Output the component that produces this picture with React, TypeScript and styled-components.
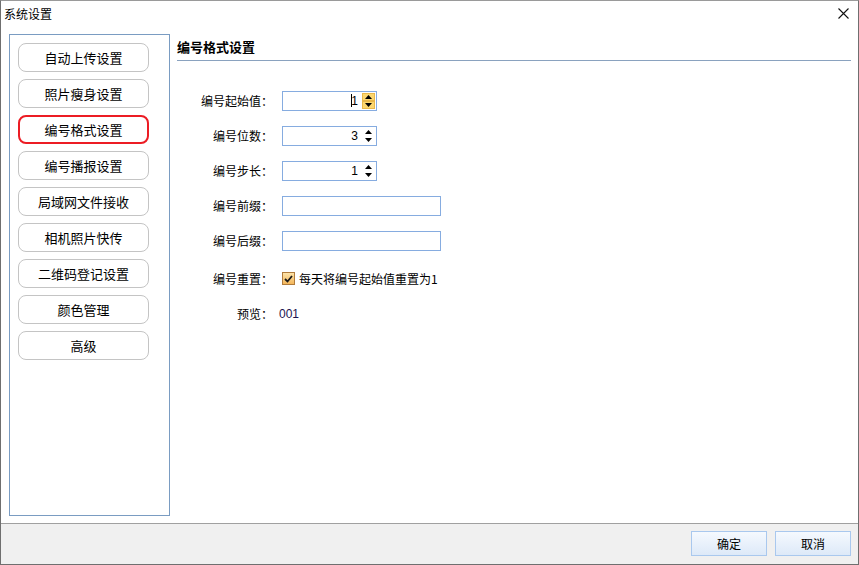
import React, { useState } from "react";
import styled, { createGlobalStyle } from "styled-components";

const Global = createGlobalStyle`
  html, body { margin: 0; padding: 0; background: #ffffff; }
  body { font-family: "Noto Sans CJK SC", "Liberation Sans", sans-serif; font-size: 12px; color: #000; }
  * { box-sizing: border-box; }
`;

const Window = styled.div`
  width: 859px;
  height: 565px;
  display: flex;
  flex-direction: column;
  background: #ffffff;
  border: 1px solid #6f6f6f;
  border-top-color: #9a9a9a;
`;

const TitleBar = styled.div`
  height: 25px;
  display: flex;
  align-items: center;
  justify-content: space-between;
  padding: 0 0 0 3px;
`;

const TitleText = styled.span`
  font-size: 12px;
  line-height: 14px;
`;

const CloseBtn = styled.div`
  width: 30px;
  height: 25px;
  display: flex;
  align-items: center;
  justify-content: center;
`;

const Body = styled.div`
  flex: 1;
  display: flex;
  gap: 7px;
  padding: 8px 7px 7px 8px;
`;

const Nav = styled.div`
  width: 161px;
  border: 1px solid #7a9cc2;
  padding: 8px 0 0 8px;
  display: flex;
  flex-direction: column;
  gap: 7px;
`;

const NavButton = styled.div<{ $active?: boolean }>`
  width: 131px;
  height: 29px;
  border-radius: 8px;
  border: ${(p) => (p.$active ? "2px solid #ec1c24" : "1px solid #c4c4c4")};
  display: flex;
  align-items: center;
  justify-content: center;
  font-size: 13px;
  line-height: 15px;
  background: #ffffff;
`;

const Content = styled.div`
  flex: 1;
  display: flex;
  flex-direction: column;
`;

const Heading = styled.div`
  height: 27px;
  padding-top: 5px;
  font-size: 13px;
  font-weight: bold;
  line-height: 16px;
  border-bottom: 1px solid #8aa2bf;
`;

const Form = styled.div`
  display: grid;
  grid-template-columns: 96px auto;
  grid-auto-rows: 35px;
  column-gap: 9px;
  align-items: center;
  margin-top: 22px;
`;

const Label = styled.div<{ $shift?: number }>`
  text-align: right;
  font-size: 12px;
  white-space: nowrap;
  margin-top: ${(p) => p.$shift ?? 0}px;
`;

const Cell = styled.div<{ $shift?: number }>`
  display: flex;
  align-items: center;
  margin-top: ${(p) => p.$shift ?? 0}px;
`;

const SpinBox = styled.div`
  width: 95px;
  height: 20px;
  border: 1px solid #86ace0;
  display: flex;
  align-items: stretch;
  background: #fff;
`;

const SpinValue = styled.div`
  flex: 1;
  text-align: right;
  padding-right: 4px;
  font-family: "Liberation Sans", sans-serif;
  font-size: 12px;
  line-height: 18px;
`;

const Caret = styled.span`
  display: inline-block;
  width: 1px;
  height: 13px;
  background: #000;
  vertical-align: -2px;
  margin-right: -1px;
`;

const SpinButtons = styled.div`
  width: 13px;
  display: flex;
  flex-direction: column;
  margin: 1px 1px 1px 0;
`;

const SpinArrow = styled.div<{ $hot?: boolean }>`
  flex: 1;
  display: flex;
  align-items: center;
  justify-content: center;
  background: ${(p) => (p.$hot ? "#fcd770" : "transparent")};
  border: ${(p) => (p.$hot ? "1px solid #e9b84a" : "1px solid transparent")};
`;

const TextBox = styled.div`
  width: 159px;
  height: 20px;
  border: 1px solid #86ace0;
  background: #fff;
`;

const Check = styled.div`
  width: 13px;
  height: 13px;
  border: 1px solid #b07b3c;
  background: linear-gradient(#fde3a8, #f4b75c);
  display: flex;
  align-items: center;
  justify-content: center;
  margin-right: 4px;
`;

const CheckLabel = styled.span`
  font-size: 12px;
`;

const Preview = styled.span`
  font-family: "Liberation Sans", sans-serif;
  font-size: 12px;
  color: #1c1450;
  margin-left: -3px;
`;

const Footer = styled.div`
  height: 41px;
  border-top: 1px solid #a0a0a0;
  background: #f0f0f0;
  display: flex;
  justify-content: flex-end;
  align-items: flex-start;
  gap: 8px;
  padding: 7px 7px 0 0;
`;

const FooterButton = styled.div`
  width: 76px;
  height: 25px;
  border: 1px solid #a9c8ee;
  background: linear-gradient(#f5f9fe, #dde9f8);
  display: flex;
  align-items: center;
  justify-content: center;
  font-size: 12px;
`;

const Arrow = ({ up }: { up?: boolean }) => (
  <svg width="7" height="4" viewBox="0 0 7 4">
    {up ? <path d="M3.5 0 L7 4 L0 4 Z" fill="#000" /> : <path d="M0 0 L7 0 L3.5 4 Z" fill="#000" />}
  </svg>
);

const Spinner = ({ value, hot, caret }: { value: string; hot?: boolean; caret?: boolean }) => (
  <SpinBox>
    <SpinValue>
      {caret && <Caret />}
      {value}
    </SpinValue>
    <SpinButtons>
      <SpinArrow $hot={hot}>
        <Arrow up />
      </SpinArrow>
      <SpinArrow $hot={hot}>
        <Arrow />
      </SpinArrow>
    </SpinButtons>
  </SpinBox>
);

const navItems = [
  "自动上传设置",
  "照片瘦身设置",
  "编号格式设置",
  "编号播报设置",
  "局域网文件接收",
  "相机照片快传",
  "二维码登记设置",
  "颜色管理",
  "高级",
];

export default function App() {
  const [active, setActive] = useState(2);
  return (
    <>
      <Global />
      <Window>
        <TitleBar>
          <TitleText>系统设置</TitleText>
          <CloseBtn>
            <svg width="11" height="11" viewBox="0 0 11 11">
              <path d="M0.5 0.5 L10.5 10.5 M10.5 0.5 L0.5 10.5" stroke="#111" strokeWidth="1.1" />
            </svg>
          </CloseBtn>
        </TitleBar>
        <Body>
          <Nav>
            {navItems.map((t, i) => (
              <NavButton key={t} $active={i === active} onClick={() => setActive(i)}>
                {t}
              </NavButton>
            ))}
          </Nav>
          <Content>
            <Heading>编号格式设置</Heading>
            <Form>
              <Label>编号起始值：</Label>
              <Cell>
                <Spinner value="1" hot caret />
              </Cell>
              <Label>编号位数：</Label>
              <Cell>
                <Spinner value="3" />
              </Cell>
              <Label>编号步长：</Label>
              <Cell>
                <Spinner value="1" />
              </Cell>
              <Label>编号前缀：</Label>
              <Cell>
                <TextBox />
              </Cell>
              <Label>编号后缀：</Label>
              <Cell>
                <TextBox />
              </Cell>
              <Label $shift={6}>编号重置：</Label>
              <Cell $shift={6}>
                <Check>
                  <svg width="9" height="8" viewBox="0 0 9 8">
                    <path d="M1 4 L3.5 6.5 L8 1" stroke="#1a1a1a" strokeWidth="1.8" fill="none" />
                  </svg>
                </Check>
                <CheckLabel>每天将编号起始值重置为1</CheckLabel>
              </Cell>
              <Label $shift={6}>预览：</Label>
              <Cell $shift={6}>
                <Preview>001</Preview>
              </Cell>
            </Form>
          </Content>
        </Body>
        <Footer>
          <FooterButton>确定</FooterButton>
          <FooterButton>取消</FooterButton>
        </Footer>
      </Window>
    </>
  );
}
